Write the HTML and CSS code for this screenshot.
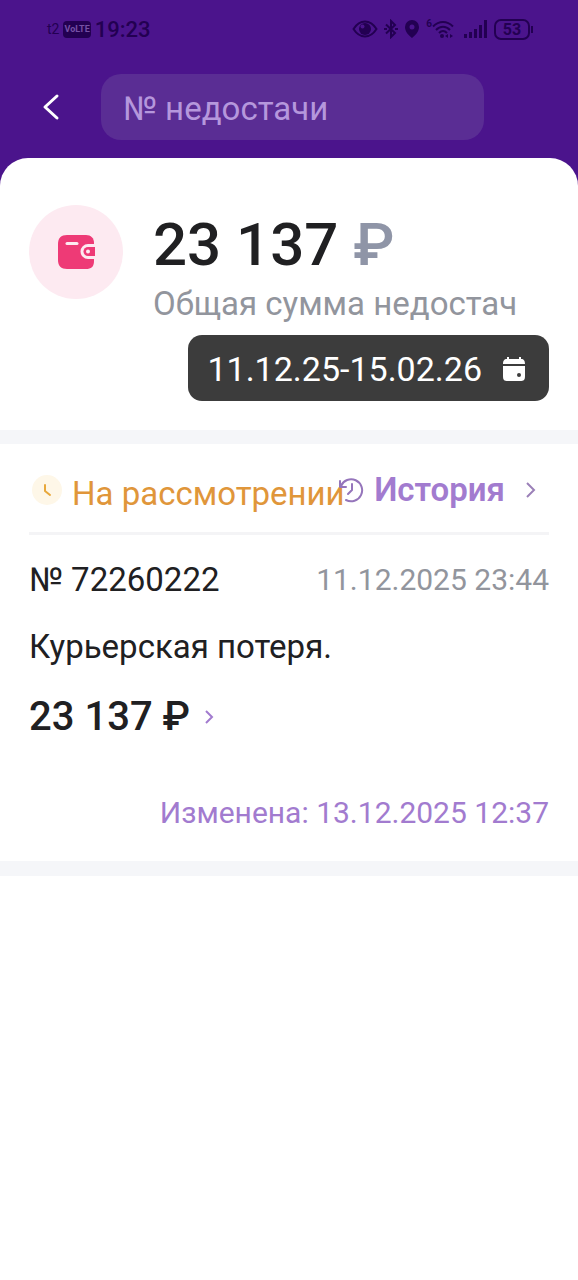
FILE: index.html
```html
<!DOCTYPE html>
<html lang="ru">
<head>
<meta charset="utf-8">
<meta name="viewport" content="width=device-width, initial-scale=1">
<title>Недостачи</title>
<link rel="stylesheet" href="styles.css">
</head>
<body>
<header class="top">
  <div class="status-bar">
    <div class="status-left">
      <span class="carrier">t2</span>
      <span class="volte">VoLTE</span>
      <span class="time">19:23</span>
    </div>
    <div class="status-right">
      <svg class="eye" width="26" height="18" viewBox="0 0 26 18" fill="none"><path d="M1.500 9C5 3.500 9 1.500 13 1.500S21 3.500 24.500 9C21 14.500 17 16.500 13 16.500S5 14.500 1.500 9Z" stroke="currentColor" stroke-width="2"/><circle cx="13" cy="9" r="6" fill="currentColor"/><circle cx="10.500" cy="6.500" r="2" fill="#4b148c"/></svg>
      <svg width="14" height="20" viewBox="0 0 14 20" fill="none" stroke="currentColor" stroke-width="2"><path d="M2 5.500 11 14 7 18V2l4 4-9 8.500"/><path d="M0 10h3M11 10h3"/></svg>
      <svg width="16" height="20" viewBox="0 0 16 20"><path fill="currentColor" fill-rule="evenodd" d="M8 1a7 7 0 0 1 7 7c0 4-3 8-7 11C4 16 1 12 1 8a7 7 0 0 1 7-7Zm0 4.500a2.500 2.500 0 1 0 0 5 2.500 2.500 0 0 0 0-5Z"/></svg>
      <span class="wifi"><span class="wifi-gen">6</span><svg width="22" height="20" viewBox="0 0 22 20" fill="none" stroke="currentColor" stroke-width="2"><path d="M1 7.500C7 1.500 15 1.500 21 7.500M4 11c4-4.500 10-4.500 14 0M7 14c2.500-2.500 5.500-2.500 8 0"/><circle cx="10" cy="17" r="2" fill="currentColor" stroke="none"/><path d="m13 17 3-2v4Zm8 0-3-2v4Z" fill="currentColor" stroke="none"/></svg></span>
      <svg width="24" height="20" viewBox="0 0 24 20" fill="currentColor"><path d="M0 15h3v4H0zM5 13h3v6H5zM10 10h3v9h-3zM15 6h3v13h-3zM20 1h3v18h-3z"/></svg>
      <span class="battery">53</span>
    </div>
  </div>
  <div class="search-row">
    <button class="back" type="button" aria-label="Назад"><svg width="18" height="28" viewBox="0 0 18 28" fill="none" stroke="#fff" stroke-width="3" stroke-linecap="round" stroke-linejoin="round"><path d="M15 3 3 14l12 11"/></svg></button>
    <input class="search" type="text" placeholder="№ недостачи" aria-label="№ недостачи">
  </div>
</header>
<main class="sheet">
  <section class="summary">
    <div class="total">
      <div class="wallet"><svg width="40" height="34" viewBox="-2 0 40 34"><path fill="#ee3a76" d="M9 0h19c5 0 8 3 8 8v18c0 6-3 8-8 8H9c-6 0-9-3-9-9V9c0-6 3-9 9-9Z"/><path d="M9 8.500h10" stroke="#fdeaf1" stroke-width="3" stroke-linecap="round"/><path fill="#fdeaf1" d="M38 9v15h-8a7.500 7.500 0 0 1 0-15Z"/><path fill="#ee3a76" d="M37 12v9h-7a4.500 4.500 0 0 1 0-9Z"/><circle cx="30" cy="16.500" r="2" fill="#fdeaf1"/></svg></div>
      <div class="total-text">
        <div class="amount">23 137 <span class="currency">₽</span></div>
        <div class="caption">Общая сумма недостач</div>
      </div>
    </div>
    <button class="period" type="button">11.12.25-15.02.26
      <svg width="24" height="26" viewBox="0 0 24 26"><path fill="#fff" d="M5 1h2v2h10V1h2v2c3 0 4 2 4 5H1c0-3 1-5 4-5ZM1 10h22v10c0 4-1 5-5 5H6c-4 0-5-1-5-5Z"/><circle cx="17" cy="19" r="2" fill="#3c3c3c"/></svg>
    </button>
  </section>
  <article class="case">
    <div class="case-head">
      <span class="clock"><svg width="12" height="16" viewBox="0 0 12 16" fill="none" stroke="#e8a83c" stroke-width="2" stroke-linecap="round" stroke-linejoin="round"><path d="M4 3v6l5 4"/></svg></span>
      <h2 class="state">На рассмотрении</h2>
      <a class="history" href="#">
        <svg width="26" height="26" viewBox="0 0 26 26" fill="none" stroke="#9575bb" stroke-width="2" stroke-linecap="round" stroke-linejoin="round"><path d="M3 9A11 11 0 1 1 8 23"/><path d="M2 4v6h6M14 7v6l-4 4"/></svg>
        <span>История</span>
        <svg class="more" width="12" height="18" viewBox="0 0 12 18" fill="none" stroke="#9b80b8" stroke-width="2"><path d="m2 2 7 7-7 7"/></svg>
      </a>
    </div>
    <div class="case-row">
      <span class="number">№ 72260222</span>
      <time class="created">11.12.2025 23:44</time>
    </div>
    <p class="reason">Курьерская потеря.</p>
    <a class="price" href="#">23 137 ₽ <svg width="10" height="16" viewBox="0 0 10 16" fill="none" stroke="#a27bcf" stroke-width="2"><path d="m1 2 6 6-6 6"/></svg></a>
    <p class="changed">Изменена: 13.12.2025 12:37</p>
  </article>
</main>
</body>
</html>
```
FILE: styles.css
```css
* { box-sizing: border-box; }
body {
  margin: 0;
  min-height: 100vh;
  background: #fff;
  color: #202022;
  font-family: Roboto, "Liberation Sans", sans-serif;
}
button, input { font: inherit; border: 0; }
a { color: inherit; text-decoration: none; }
svg { flex: none; }
p, h2 { margin: 0; font-weight: 400; }

.top {
  background: #4b148c;
  padding-bottom: 48px;
}
.status-bar {
  display: flex;
  justify-content: space-between;
  align-items: center;
  height: 58px;
  padding: 0 48px 0 47px;
  color: #230052;
}
.status-left, .status-right { display: flex; align-items: center; }
.status-left { gap: 4px; }
.status-right { gap: 6px; }
.carrier { font-size: 14px; }
.volte {
  padding: 0 1px;
  border-radius: 4px;
  background: #230052;
  color: #7650a5;
  font-size: 9px;
  line-height: 17px;
  font-weight: 700;
}
.time { font-size: 22px; font-weight: 500; }
.wifi { display: flex; align-items: flex-start; margin-right: 4px; }
.wifi-gen { font-size: 10px; line-height: 10px; font-weight: 700; }
.battery {
  position: relative;
  width: 36px;
  border: 2px solid #230052;
  border-radius: 7px;
  font-size: 16px;
  line-height: 17px;
  font-weight: 700;
  text-align: center;
}
.battery::after {
  content: "";
  position: absolute;
  right: -5px;
  top: 5px;
  width: 2px;
  height: 7px;
  background: #230052;
}
.search-row {
  display: flex;
  align-items: center;
  padding: 16px 94px 0 0;
}
.back {
  display: flex;
  justify-content: center;
  flex: none;
  width: 101px;
  padding: 0;
  background: none;
}
.search {
  flex: 1;
  min-width: 0;
  height: 66px;
  padding: 2px 22px 0;
  border-radius: 20px;
  background: #5a2d94;
  color: #fff;
  font-size: 33px;
}
.search::placeholder { color: #b597dc; opacity: 1; }

.sheet {
  margin-top: -30px;
  border-radius: 28px 28px 0 0;
  background: #fff;
}
.summary {
  display: flex;
  flex-direction: column;
  padding: 47px 29px 29px;
  border-bottom: 14px solid #f5f6f9;
}
.total { display: flex; align-items: flex-start; gap: 30px; }
.wallet {
  display: flex;
  align-items: center;
  justify-content: center;
  flex: none;
  width: 94px;
  height: 94px;
  border-radius: 50%;
  background: #fdeaf1;
}
.total-text { padding-top: 8px; white-space: nowrap; }
.amount { font-size: 60px; line-height: 64px; font-weight: 500; }
.currency { color: #8f95a7; }
.caption { color: #92959d; font-size: 33px; line-height: 54px; }
.period {
  display: flex;
  align-items: center;
  align-self: flex-end;
  gap: 20px;
  margin-top: 4px;
  padding: 2px 23px 0 19px;
  border-radius: 14px;
  background: #3c3c3c;
  color: #fff;
  font-size: 34px;
  line-height: 64px;
}

.case {
  padding: 0 29px 28px;
  border-bottom: 15px solid #f5f6f9;
}
.case-head {
  display: flex;
  align-items: center;
  height: 91px;
  padding: 4px 12px 0 3px;
  border-bottom: 3px solid #f4f4f6;
}
.clock {
  display: flex;
  align-items: center;
  justify-content: center;
  flex: none;
  width: 30px;
  height: 30px;
  margin-right: 10px;
  border-radius: 50%;
  background: #fef7e8;
}
.state {
  flex: 1;
  min-width: 0;
  padding-top: 8px;
  color: #e0963a;
  font-size: 33px;
  line-height: 40px;
  white-space: nowrap;
}
.history {
  display: flex;
  align-items: center;
  gap: 10px;
  color: #a27bcf;
  font-size: 33px;
  line-height: 40px;
  font-weight: 600;
}
.more { margin-left: 10px; }
.case-row {
  display: flex;
  justify-content: space-between;
  align-items: center;
  padding-top: 23px;
  line-height: 44px;
  white-space: nowrap;
}
.number { font-size: 33px; }
.created { color: #92959d; font-size: 30px; }
.reason { margin-top: 23px; font-size: 33px; line-height: 44px; }
.price {
  display: inline-flex;
  align-items: center;
  gap: 15px;
  margin-top: 24px;
  font-size: 40px;
  line-height: 48px;
  font-weight: 500;
}
.changed {
  margin-top: 52px;
  color: #a27bcf;
  font-size: 30px;
  line-height: 40px;
  text-align: right;
}
```
